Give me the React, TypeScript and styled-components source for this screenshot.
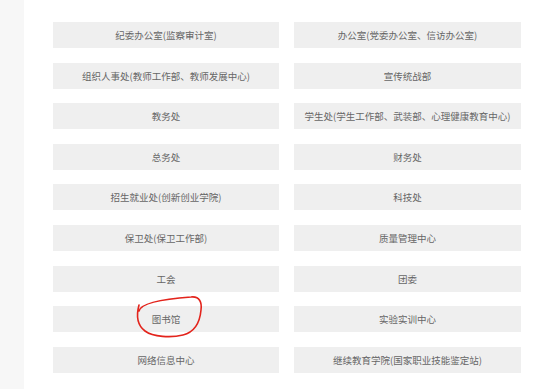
import * as React from 'react';
import styled, { createGlobalStyle } from 'styled-components';

const GlobalStyle = createGlobalStyle`
  html, body {
    margin: 0;
    padding: 0;
    background: #fff;
  }
  body {
    font-family: 'Microsoft YaHei', 'Noto Sans CJK SC', sans-serif;
  }
`;

const Page = styled.div`
  display: flex;
  height: 389px;
  overflow: hidden;
`;

const SideStrip = styled.div`
  width: 24px;
  flex-shrink: 0;
  background: #f7f7f7;
`;

const Content = styled.div`
  padding: 22px 0 0 29px;
`;

const LinkGrid = styled.ul`
  list-style: none;
  margin: 0;
  padding: 0;
  display: grid;
  grid-template-columns: 226px 227px;
  column-gap: 15px;
  row-gap: 14.6px;
`;

const LinkItem = styled.li`
  position: relative;
  height: 26px;
  background: #efefef;
  display: flex;
  align-items: center;
  justify-content: center;
  font-size: 9.5px;
  color: #666;
  white-space: nowrap;
`;

const Circle = styled.svg`
  position: absolute;
  left: 80px;
  top: -11px;
  width: 72px;
  height: 44px;
  overflow: visible;
  pointer-events: none;
`;

const links = [
  '纪委办公室(监察审计室)',
  '办公室(党委办公室、信访办公室)',
  '组织人事处(教师工作部、教师发展中心)',
  '宣传统战部',
  '教务处',
  '学生处(学生工作部、武装部、心理健康教育中心)',
  '总务处',
  '财务处',
  '招生就业处(创新创业学院)',
  '科技处',
  '保卫处(保卫工作部)',
  '质量管理中心',
  '工会',
  '团委',
  '图书馆',
  '实验实训中心',
  '网络信息中心',
  '继续教育学院(国家职业技能鉴定站)',
];

const App = () => {
  return (
    <>
      <GlobalStyle />
      <Page>
        <SideStrip />
        <Content>
          <LinkGrid>
            {links.map((name) => (
              <LinkItem key={name}>
                {name}
                {name === '图书馆' && (
                  <Circle viewBox='0 0 72 44'>
                    <path
                      d='M6 16 C 8 8, 30 4, 58 2 C 67 1, 69 8, 68 15 C 67 26, 62 37, 50 40 C 38 43, 20 42, 12 36 C 4 30, 3 21, 6 10'
                      fill='none'
                      stroke='#e3241c'
                      strokeWidth='1.6'
                      strokeLinecap='round'
                    />
                  </Circle>
                )}
              </LinkItem>
            ))}
          </LinkGrid>
        </Content>
      </Page>
    </>
  );
};

export default App;
